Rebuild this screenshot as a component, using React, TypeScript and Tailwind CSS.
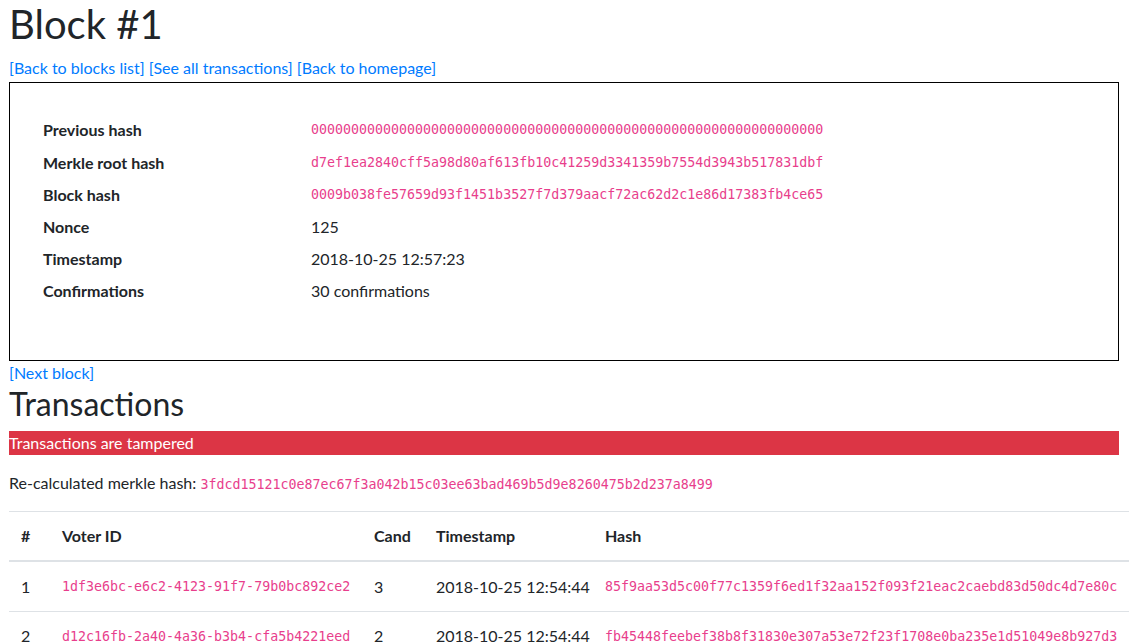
import React from 'react';

const blockRows: { label: string; value: string; mono?: boolean; h: string }[] = [
  { label: 'Previous hash', value: '0000000000000000000000000000000000000000000000000000000000000000', mono: true, h: 'h-[33px]' },
  { label: 'Merkle root hash', value: 'd7ef1ea2840cff5a98d80af613fb10c41259d3341359b7554d3943b517831dbf', mono: true, h: 'h-[33px]' },
  { label: 'Block hash', value: '0009b038fe57659d93f1451b3527f7d379aacf72ac62d2c1e86d17383fb4ce65', mono: true, h: 'h-[32px]' },
  { label: 'Nonce', value: '125', h: 'h-[32px]' },
  { label: 'Timestamp', value: '2018-10-25 12:57:23', h: 'h-[32px]' },
  { label: 'Confirmations', value: '30 confirmations', h: 'h-[32px]' },
];

const transactions = [
  {
    n: 1,
    voter: '1df3e6bc-e6c2-4123-91f7-79b0bc892ce2',
    cand: 3,
    ts: '2018-10-25 12:54:44',
    hash: '85f9aa53d5c00f77c1359f6ed1f32aa152f093f21eac2caebd83d50dc4d7e80c',
  },
  {
    n: 2,
    voter: 'd12c16fb-2a40-4a36-b3b4-cfa5b4221eed',
    cand: 2,
    ts: '2018-10-25 12:54:44',
    hash: 'fb45448feebef38b8f31830e307a53e72f23f1708e0ba235e1d51049e8b927d3',
  },
];

const mono = "font-['DejaVu_Sans_Mono',monospace] text-[13.3px] leading-none text-[#e83e8c]";
const link = 'text-[#007bff]';
const cols = 'grid grid-cols-[41px_312px_62px_169px_536px] w-[1120px] whitespace-nowrap';

export default function App() {
  return (
    <div className="min-h-screen bg-white pl-[9px] pr-[10px] text-base leading-6 text-[#212529] font-['Lato',sans-serif]">
      <h1 className="mb-2 text-[40px] leading-[48px] font-normal">Block #1</h1>

      <div className="h-6">
        <a className={link}>[Back to blocks list]</a> <a className={link}>[See all transactions]</a>{' '}
        <a className={link}>[Back to homepage]</a>
      </div>

      {/* Block details */}
      <div className="mt-[2px] h-[279px] border border-black pl-[33px] pt-[30px]">
        {blockRows.map((r) => (
          <div key={r.label} className={`grid grid-cols-[268px_1fr] items-center ${r.h}`}>
            <div className="font-bold">{r.label}</div>
            <div className={r.mono ? mono : ''}>{r.value}</div>
          </div>
        ))}
      </div>

      <div className="h-6">
        <a className={link}>[Next block]</a>
      </div>

      <h2 className="mb-2 text-[32px] leading-[38.4px] font-normal">Transactions</h2>

      <div className="h-6 bg-[#dc3545] leading-6 text-white">Transactions are tampered</div>

      <p className="my-4 h-6">
        Re-calculated merkle hash:{' '}
        <span className={mono}>3fdcd15121c0e87ec67f3a042b15c03ee63bad469b5d9e8260475b2d237a8499</span>
      </p>

      {/* Transactions table */}
      <div className={`${cols} border-t border-b-2 border-[#dee2e6] font-bold`}>
        <div className="p-3">#</div>
        <div className="p-3">Voter ID</div>
        <div className="p-3">Cand</div>
        <div className="p-3">Timestamp</div>
        <div className="p-3">Hash</div>
      </div>
      {transactions.map((t, i) => (
        <div key={t.n} className={`${cols} h-[49px] items-center ${i > 0 ? 'border-t border-[#dee2e6]' : ''}`}>
          <div className="px-3">{t.n}</div>
          <div className={`px-3 ${mono}`}>{t.voter}</div>
          <div className="px-3">{t.cand}</div>
          <div className="px-3">{t.ts}</div>
          <div className={`px-3 ${mono}`}>{t.hash}</div>
        </div>
      ))}
    </div>
  );
}
